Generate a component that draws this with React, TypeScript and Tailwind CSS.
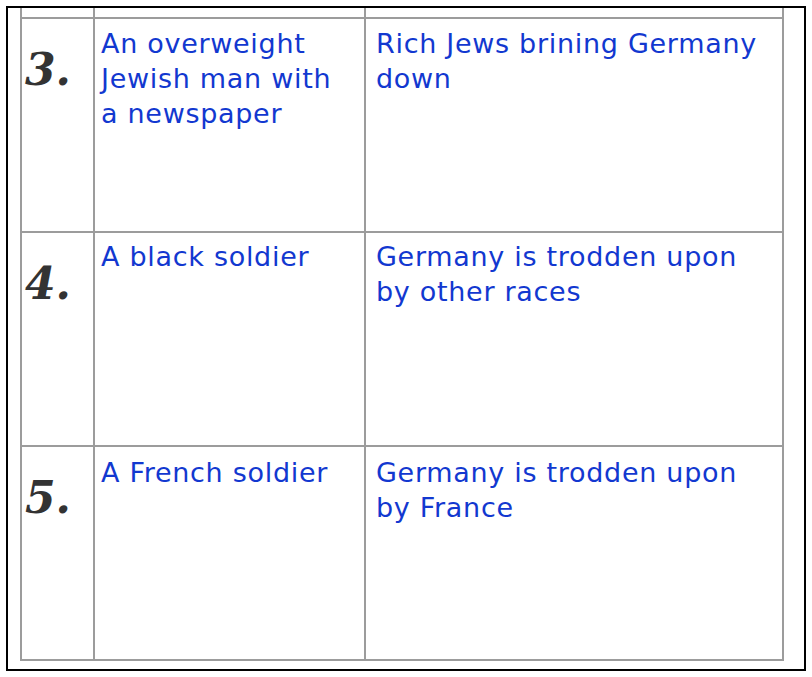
import React from "react";

const rows = [
  {
    n: "3.",
    a: ["An overweight", "Jewish man with", "a newspaper"],
    b: ["Rich Jews brining Germany", "down"],
    pad: "pt-[7px]",
  },
  {
    n: "4.",
    a: ["A black soldier"],
    b: ["Germany is trodden upon", "by other races"],
    pad: "pt-[6px]",
  },
  {
    n: "5.",
    a: ["A French soldier"],
    b: ["Germany is trodden upon", "by France"],
    pad: "pt-[8px]",
  },
];

export default function App() {
  return (
    <div className="w-[812px] h-[677px] bg-white pt-[6px] pl-[6px]">
      <div className="w-[800px] h-[665px] border-2 border-black pl-[12px]">
        <div className="w-[764px] grid grid-cols-[73px_271px_420px]">
          <div className="h-[9px] border-l-2 border-[#9c9c9c]" />
          <div className="h-[9px] border-l-2 border-[#9c9c9c]" />
          <div className="h-[9px] border-l-2 border-r-2 border-[#9c9c9c]" />
        </div>
        {rows.map((r, i) => (
          <div
            key={i}
            className={
              i === 2
                ? "w-[764px] h-[216px] grid grid-cols-[73px_271px_420px] border-t-2 border-b-2 border-[#9c9c9c]"
                : "w-[764px] h-[214px] grid grid-cols-[73px_271px_420px] border-t-2 border-[#9c9c9c]"
            }
          >
            <div className="border-l-2 border-[#9c9c9c] pl-[3px] pt-[26px]">
              <span className="font-['DejaVu_Serif',serif] font-bold italic text-[44px] leading-[50px] text-[#333333]">
                {r.n}
              </span>
            </div>
            <div
              className={`border-l-2 border-[#9c9c9c] pl-[6px] ${r.pad} font-['DejaVu_Sans',sans-serif] text-[27px] tracking-[0.7px] leading-[35px] text-[#1238d0]`}
            >
              {r.a.map((t, j) => (
                <div key={j} className="whitespace-nowrap">{t}</div>
              ))}
            </div>
            <div
              className={`border-l-2 border-r-2 border-[#9c9c9c] pl-[10px] ${r.pad} font-['DejaVu_Sans',sans-serif] text-[27px] tracking-[0.7px] leading-[35px] text-[#1238d0]`}
            >
              {r.b.map((t, j) => (
                <div key={j} className="whitespace-nowrap">{t}</div>
              ))}
            </div>
          </div>
        ))}
      </div>
    </div>
  );
}
